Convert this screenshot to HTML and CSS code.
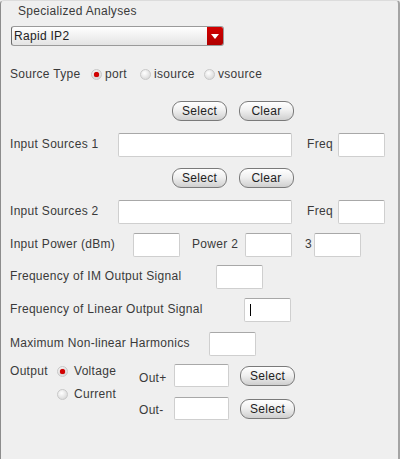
FILE: index.html
```html
<!DOCTYPE html>
<html>
<head>
<meta charset="utf-8">
<link rel="stylesheet" href="styles.css">
</head>
<body>
<div class="panel">
  <div class="title">Specialized Analyses</div>
  <div class="combo">
    <span class="combo-text">Rapid IP2</span>
    <span class="combo-arrow"><svg width="8" height="5" viewBox="0 0 8 5"><path d="M0 0H8L4 5Z" fill="#fff"/></svg></span>
  </div>

  <div class="row source-row">
    <span class="lbl st-lbl">Source Type</span>
    <span class="radio on"></span><span class="rtext rt-port">port</span>
    <span class="radio"></span><span class="rtext rt-isrc">isource</span>
    <span class="radio"></span><span class="rtext">vsource</span>
  </div>

  <div class="row btn-row r-btn1">
    <span class="btn">Select</span>
    <span class="btn">Clear</span>
  </div>
  <div class="row field-row r-is1">
    <span class="lbl w-is">Input Sources 1</span>
    <span class="field wide"></span>
    <span class="lbl freq">Freq</span>
    <span class="field"></span>
  </div>
  <div class="row btn-row r-btn2">
    <span class="btn">Select</span>
    <span class="btn">Clear</span>
  </div>
  <div class="row field-row r-is2">
    <span class="lbl w-is">Input Sources 2</span>
    <span class="field wide"></span>
    <span class="lbl freq">Freq</span>
    <span class="field"></span>
  </div>
  <div class="row field-row r-pow">
    <span class="lbl w-pow">Input Power (dBm)</span>
    <span class="field"></span>
    <span class="lbl w-p2">Power 2</span>
    <span class="field"></span>
    <span class="lbl w-p3">3</span>
    <span class="field"></span>
  </div>
  <div class="row field-row r-im">
    <span class="lbl w-im">Frequency of IM Output Signal</span>
    <span class="field"></span>
  </div>
  <div class="row field-row r-lin">
    <span class="lbl w-lin">Frequency of Linear Output Signal</span>
    <span class="field"><span class="caret"></span></span>
  </div>
  <div class="row field-row r-harm">
    <span class="lbl w-harm">Maximum Non-linear Harmonics</span>
    <span class="field"></span>
  </div>

  <div class="output">
    <div class="out-left">
      <div class="out-line">
        <span class="lbl w-out">Output</span>
        <span class="radio on"></span><span class="rtext">Voltage</span>
      </div>
      <div class="out-line second">
        <span class="radio"></span><span class="rtext">Current</span>
      </div>
    </div>
    <div class="out-right">
      <div class="out-row">
        <span class="lbl w-op">Out+</span>
        <span class="field mid"></span>
        <span class="btn">Select</span>
      </div>
      <div class="out-row two">
        <span class="lbl w-op">Out-</span>
        <span class="field mid"></span>
        <span class="btn">Select</span>
      </div>
    </div>
  </div>
</div>
</body>
</html>
```

FILE: styles.css
```css
* { box-sizing: border-box; }
html, body {
  margin: 0;
  padding: 0;
  background: #efefef;
}
body {
  font-family: "Liberation Sans", Arial, sans-serif;
  font-size: 12px;
  letter-spacing: 0.3px;
  color: #3a3a3a;
}
.panel {
  width: 400px;
  height: 459px;
  background: #efefef;
  border-left: 1px solid #8c8c8c;
  border-right: 2px solid #a4a4a4;
  border-top: 1px solid #dcdcdc;
  border-radius: 4px 4px 0 0;
  padding-left: 9px;
  overflow: hidden;
}
.title {
  height: 20px;
  line-height: 20px;
  padding-left: 8px;
}
.combo {
  margin-top: 5px;
  margin-left: 1px;
  width: 213px;
  height: 20px;
  display: flex;
  border: 1px solid #9a9a9a;
  border-left-color: #6c6c6c;
  border-radius: 3px;
  background: linear-gradient(#ffffff, #e4e4e4);
  overflow: hidden;
}
.combo-text {
  flex: 1;
  line-height: 18px;
  padding-left: 2px;
  color: #222;
}
.combo-arrow {
  width: 16px;
  background: linear-gradient(#d20000, #b00000);
  display: flex;
  align-items: center;
  justify-content: center;
}
.row {
  display: flex;
  align-items: center;
}
.source-row {
  margin-top: 18px;
  height: 20px;
}
.radio {
  width: 11px;
  height: 11px;
  border-radius: 50%;
  border: 1px solid #c8c8c8;
  background: radial-gradient(circle at 40% 35%, #ffffff, #dedede 70%, #c4c4c4);
  position: relative;
  flex: none;
}
.radio.on::after {
  content: "";
  position: absolute;
  left: 2px;
  top: 2px;
  width: 5px;
  height: 5px;
  border-radius: 50%;
  background: #d40000;
  box-shadow: 0 0 1px #900;
}
.st-lbl { width: 81px; }
.source-row .rtext { margin-left: 3px; }
.rt-port { width: 35px; }
.rt-isrc { width: 50px; }
.btn-row {
  height: 20px;
  padding-left: 162px;
  gap: 12px;
}
.r-btn1 { margin-top: 17px; }
.r-btn2 { margin-top: 11px; }
.btn {
  width: 55px;
  height: 20px;
  border: 1px solid #7a7a7a;
  border-radius: 9px;
  background: linear-gradient(#ffffff 0%, #f0f0f0 45%, #cfcfcf 100%);
  display: flex;
  align-items: center;
  justify-content: center;
  color: #222;
  flex: none;
}
.field-row { height: 24px; }
.r-is1 { margin-top: 12px; }
.r-is2 { margin-top: 12px; }
.r-pow { margin-top: 9px; }
.r-im { margin-top: 8px; }
.r-lin { margin-top: 9px; }
.r-harm { margin-top: 10px; }
.lbl { flex: none; white-space: nowrap; }
.field-row .lbl { padding-bottom: 2px; }
.field {
  width: 47px;
  height: 24px;
  background: #fff;
  border: 1px solid #cfcfcf;
  border-top-color: #a8a8a8;
  border-radius: 2px;
  flex: none;
  position: relative;
}
.field.wide { width: 174px; }
.field.mid { width: 55px; height: 23px; }
.caret {
  position: absolute;
  left: 5px;
  top: 5px;
  width: 1px;
  height: 12px;
  background: #000;
}
.w-is { width: 108px; }
.freq { margin-left: 15px; width: 31px; }
.w-pow { width: 123px; }
.w-p2 { margin-left: 12px; width: 53px; }
.w-p3 { margin-left: 13px; width: 9px; }
.w-im { width: 206px; }
.w-lin { width: 234px; }
.w-harm { width: 199px; }
.output {
  margin-top: 8px;
  display: flex;
}
.out-left { width: 129px; padding-top: 1px; }
.out-line {
  display: flex;
  align-items: center;
  height: 12px;
}
.out-line.second { margin-top: 11px; padding-left: 47px; }
.w-out { width: 47px; }
.out-line .rtext { margin-left: 6px; }
.out-row {
  display: flex;
  align-items: center;
  height: 23px;
}
.out-row.two { margin-top: 10px; }
.w-op { width: 35px; padding-top: 5px; }
.out-row.two .w-op { padding-top: 2px; }
.out-row .btn { margin-left: 11px; }
```
